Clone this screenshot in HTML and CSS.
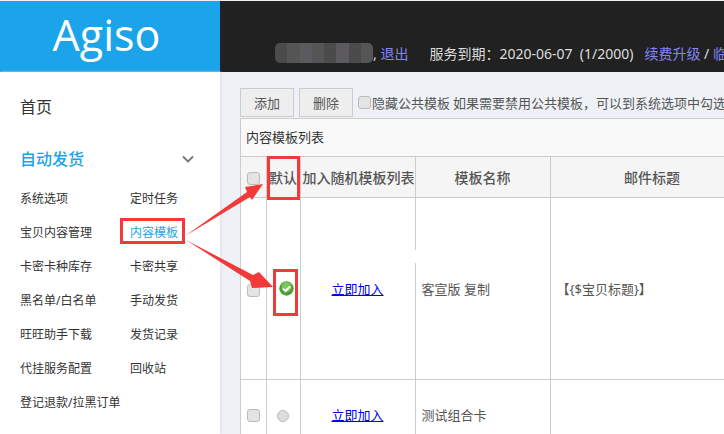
FILE: index.html
```html
<!doctype html>
<html>
<head>
<meta charset="utf-8">
<title>内容模板</title>
<link rel="stylesheet" href="styles.css">
</head>
<body>
<div id="top">
	<div class="logo">Agiso</div>
	<div class="bar">
		<span class="mosaic"><i></i><i></i><i></i><i></i><i></i><i></i><i></i><i></i></span>
		<span class="user">, <a href="#">退出</a></span>
		<span class="service">服务到期：2020-06-07&nbsp; (1/2000)</span>
		<span class="renew"><a href="#">续费升级</a> / <a href="#">临</a></span>
	</div>
</div>
<div id="main">
	<div id="side">
		<div class="home">首页</div>
		<div class="group">
			<span>自动发货</span>
			<svg width="12" height="8" viewBox="0 0 12 8"><path d="M1 1.500l5 5 5-5" fill="none" stroke="#777" stroke-width="1.800"/></svg>
		</div>
		<ul class="sub">
			<li>系统选项</li><li>定时任务</li>
			<li>宝贝内容管理</li><li class="on">内容模板</li>
			<li>卡密卡种库存</li><li>卡密共享</li>
			<li>黑名单/白名单</li><li>手动发货</li>
			<li>旺旺助手下载</li><li>发货记录</li>
			<li>代挂服务配置</li><li>回收站</li>
			<li>登记退款/拉黑订单</li>
		</ul>
	</div>
	<div id="con">
		<div class="tools">
			<button>添加</button>
			<button>删除</button>
			<label><span class="chk"></span>隐藏公共模板</label>
			<span class="tip">如果需要禁用公共模板，可以到系统选项中勾选</span>
		</div>
		<div class="panel">
			<div class="title">内容模板列表</div>
			<table>
				<tr class="head">
					<th class="c1"><span class="chk"></span></th>
					<th class="c2">默认</th>
					<th class="c3">加入随机模板列表</th>
					<th class="c4">模板名称</th>
					<th class="c5">邮件标题</th>
					<th></th>
				</tr>
				<tr class="row1">
					<td><span class="chk"></span></td>
					<td><svg class="ok" width="15" height="15" viewBox="0 0 15 15"><circle cx="7.500" cy="7.500" r="7.200" fill="#4f9e35"/><circle cx="7.500" cy="6" r="5" fill="#7cc55c"/><path d="M4 7.600l2.500 2.400 4.600-4.600" fill="none" stroke="#fff" stroke-width="2"/></svg></td>
					<td><a href="#">立即加入</a></td>
					<td class="left">客宣版 复制</td>
					<td class="left">【{$宝贝标题}】</td>
					<td></td>
				</tr>
				<tr class="row2">
					<td><span class="chk"></span></td>
					<td><span class="radio"></span></td>
					<td><a href="#">立即加入</a></td>
					<td class="left">测试组合卡</td>
					<td></td>
					<td></td>
				</tr>
			</table>
		</div>
	</div>
</div>
<svg id="marks" width="724" height="434" viewBox="0 0 724 434">
	<rect x="414" y="250" width="3" height="13" fill="#fff"/>
	<g fill="none" stroke="#f33a3a" stroke-width="3">
		<rect x="121.500" y="219.500" width="62" height="23"/>
		<rect x="268.500" y="157.500" width="30" height="41"/>
		<rect x="274.500" y="270.500" width="22" height="44"/>
	</g>
	<g fill="#f33a3a">
		<polygon points="185,236 247,192 245,187 263,184 252,200 250,197"/>
		<polygon points="186,240 253,275 259,272 273,287 252,288 250,281"/>
	</g>
</svg>
</body>
</html>
```

FILE: styles.css
```css
*{margin:0; padding:0; list-style:none; box-sizing:border-box;}
html,body{
	width: 724px;
	height: 434px;
	overflow: hidden;
}
body{
	position: relative;
	padding-top: 1px;
	background: #eef1f5;
	font-family: "Noto Sans","Noto Sans CJK SC",sans-serif;
	font-size: 13px;
	color: #555;
}
#top{
	display: flex;
	height: 71px;
}
.logo{
	flex: none;
	width: 220px;
	padding-right: 7px;
	background: #1ba4e9;
	color: #fff;
	font-family: "Open Sans",sans-serif;
	font-size: 43px;
	line-height: 68px;
	text-align: center;
}
.bar{
	flex: 1;
	display: flex;
	align-items: center;
	padding: 33px 0 0 55px;
	background: #212121;
	color: #ddd;
	font-size: 14px;
	white-space: nowrap;
	overflow: hidden;
}
.bar a{color: #8585f5; text-decoration: none;}
.mosaic{
	flex: none;
	display: flex;
	width: 98px;
	height: 20px;
	border-radius: 5px;
	overflow: hidden;
}
.mosaic i{flex: 1; background: #4b4b4b;}
.mosaic i:nth-child(2n){background: #555;}
.mosaic i:nth-child(3n){background: #5c5a5e;}
.user{margin-right: 21px;}
.service{margin-right: 11px;}
#main{
	display: flex;
	height: 362px;
}
#side{
	flex: none;
	width: 220px;
	background: #fff;
	box-shadow: 1px 0 2px #dde;
	padding-left: 20px;
	color: #333;
}
.home{
	margin-top: 24px;
	font-size: 16px;
	line-height: 22px;
}
.group{
	display: flex;
	align-items: center;
	justify-content: space-between;
	margin-top: 30px;
	padding-right: 26px;
	font-size: 16px;
	line-height: 22px;
	font-weight: 500;
	color: #1ba4e9;
}
.sub{
	display: grid;
	grid-template-columns: 110px 1fr;
	grid-auto-rows: 34px;
	margin-top: 12px;
	font-size: 12px;
	line-height: 34px;
}
.sub .on{color: #1ba4e9;}
#con{
	flex: 1;
	padding: 15px 0 0 20px;
	overflow: hidden;
}
.tools{
	display: flex;
	align-items: center;
	height: 30px;
	white-space: nowrap;
}
.tools button{
	flex: none;
	width: 54px;
	height: 29px;
	margin-right: 5px;
	border: 1px solid #ccc;
	background: #eee;
	color: #555;
	font: 13px "Noto Sans","Noto Sans CJK SC",sans-serif;
}
.tools label{flex: none; display: flex; align-items: center; margin-right: 3px;}
.tools label .chk{margin-right: 1px;}
.tip{flex: none;}
.chk{
	display: inline-block;
	width: 13px;
	height: 13px;
	border: 1px solid #bbb;
	border-radius: 3px;
	background: #e4e4e4;
	vertical-align: middle;
}
.panel{
	width: 900px;
	margin-top: 1px;
	border: 1px solid #ccc;
	background: #fff;
}
.title{
	height: 37px;
	padding-left: 5px;
	background: #f9f9f9;
	color: #333;
	line-height: 37px;
}
table{
	width: 100%;
	table-layout: fixed;
	border-collapse: collapse;
}
th,td{
	border: 1px solid #ccc;
	text-align: center;
	white-space: nowrap;
	overflow: hidden;
}
th{background: #f5f5f5; font-size: 14px; font-weight: 500; padding: 0 2px;}
th:first-child,td:first-child{border-left: 0;}
.head{height: 41px;}
.row1{height: 182px;}
.row2{height: 70px; vertical-align: top;}
.row2 td{padding-top: 25px;}
.c1{width: 25px;}
.c2{width: 34px;}
.c3{width: 115px;}
.c4{width: 135px;}
.c5{width: 204px;}
td.left{text-align: left; padding-left: 6px;}
td a{color: #00e; text-decoration: underline;}
.ok{display: block; margin: 0 0 0 12px;}
.radio{
	display: inline-block;
	width: 12px;
	height: 12px;
	border: 1px solid #bbb;
	border-radius: 50%;
	background: #ddd;
	vertical-align: middle;
}
#marks{
	position: absolute;
	left: 0;
	top: 0;
}
```
